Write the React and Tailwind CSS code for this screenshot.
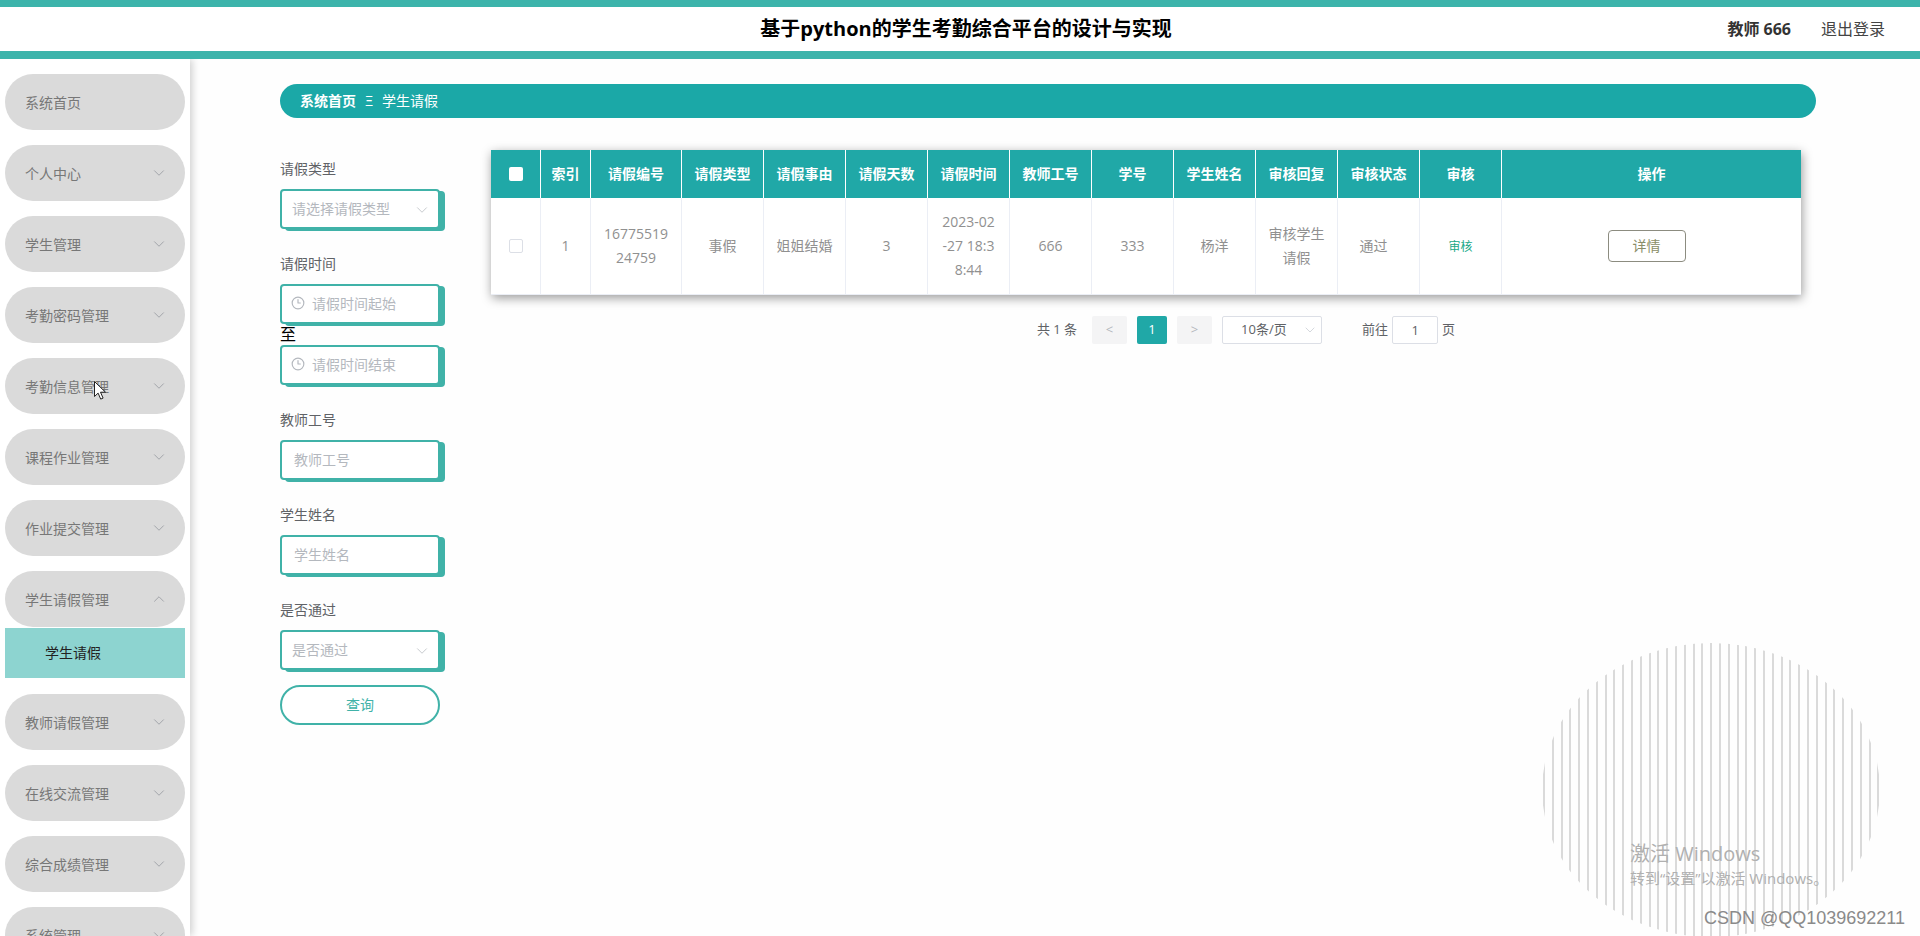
import { ChevronDown, ChevronUp, Clock3 } from "lucide-react";

const menu = [
  { label: "系统首页", leaf: true },
  { label: "个人中心" },
  { label: "学生管理" },
  { label: "考勤密码管理" },
  { label: "考勤信息管理" },
  { label: "课程作业管理" },
  { label: "作业提交管理" },
  { label: "学生请假管理", children: ["学生请假"] },
  { label: "教师请假管理" },
  { label: "在线交流管理" },
  { label: "综合成绩管理" },
  { label: "系统管理" },
];

const columns = [
  { label: "索引", width: "w-[50px]" },
  { label: "请假编号", width: "w-[91px]" },
  { label: "请假类型", width: "w-[82px]" },
  { label: "请假事由", width: "w-[82px]" },
  { label: "请假天数", width: "w-[82px]" },
  { label: "请假时间", width: "w-[82px]" },
  { label: "教师工号", width: "w-[82px]" },
  { label: "学号", width: "w-[82px]" },
  { label: "学生姓名", width: "w-[82px]" },
  { label: "审核回复", width: "w-[82px]" },
  { label: "审核状态", width: "w-[82px]" },
  { label: "审核", width: "w-[82px]" },
  { label: "操作", width: "" },
];

const record = [
  ["1"],
  ["16775519", "24759"],
  ["事假"],
  ["姐姐结婚"],
  ["3"],
  ["2023-02", "-27 18:3", "8:44"],
  ["666"],
  ["333"],
  ["杨洋"],
  ["审核学生", "请假"],
];

const fieldBox =
  "h-10 w-40 appearance-none rounded border-2 border-[#40b2a8] bg-white pb-px text-sm text-[#b4b8be] placeholder:text-[#b4b8be] shadow-[5px_2px_0_#40b2a8] outline-none";

function Header() {
  return (
    <header className="relative z-20 grid h-[59px] shrink-0 grid-cols-[1fr_auto_1fr] items-center border-t-[7px] border-b-8 border-[#3cb4ab] bg-white">
      <h1 className="col-start-2 pl-3 text-xl leading-7 font-bold text-black">
        基于python的学生考勤综合平台的设计与实现
      </h1>
      <div className="flex items-center justify-end gap-[30px] pr-[35px] text-base leading-6 text-[#333]">
        <span className="font-bold">教师 666</span>
        <button type="button" className="text-[#444]">
          退出登录
        </button>
      </div>
    </header>
  );
}

function Sidebar() {
  return (
    <nav className="z-10 w-[190px] shrink-0 overflow-hidden bg-white px-[5px] pt-[15px] shadow-[2px_0_8px_rgba(0,0,0,0.2)]">
      <ul className="flex flex-col gap-[15px]">
        {menu.map((item) => (
          <li key={item.label}>
            <button
              type="button"
              className="flex h-14 w-full items-center justify-between rounded-full bg-[#dadada] pr-[17px] pb-px pl-5 text-sm text-[#777]"
            >
              <span className="pt-[3px]">{item.label}</span>
              {!item.leaf &&
                (item.children ? (
                  <ChevronUp size={18} strokeWidth={1} className="text-[#909399]" />
                ) : (
                  <ChevronDown size={18} strokeWidth={1} className="text-[#909399]" />
                ))}
            </button>
            {item.children && (
              <ul className="py-px">
                {item.children.map((child) => (
                  <li key={child}>
                    <a
                      href="#leave"
                      className="flex h-[50px] items-center bg-[#8dd4d0] pl-10 text-sm text-[#222]"
                    >
                      {child}
                    </a>
                  </li>
                ))}
              </ul>
            )}
          </li>
        ))}
      </ul>
    </nav>
  );
}

function Label({ htmlFor, children }) {
  return (
    <label htmlFor={htmlFor} className="block h-10 text-sm leading-10 text-[#606266]">
      {children}
    </label>
  );
}

function SelectField({ id, label, placeholder }) {
  return (
    <div>
      <Label htmlFor={id}>{label}</Label>
      <div className="relative w-40">
        <select id={id} className={`${fieldBox} pl-[10px]`}>
          <option>{placeholder}</option>
        </select>
        <ChevronDown
          size={18}
          strokeWidth={1}
          className="pointer-events-none absolute top-3 right-[9px] text-[#b4b8be]"
        />
      </div>
    </div>
  );
}

function TextField({ id, label }) {
  return (
    <div>
      <Label htmlFor={id}>{label}</Label>
      <input id={id} type="text" placeholder={label} className={`${fieldBox} block pl-3`} />
    </div>
  );
}

function TimeInput({ id, placeholder }) {
  return (
    <div className="relative w-40">
      <input
        id={id}
        type="text"
        aria-label={placeholder}
        placeholder={placeholder}
        className={`${fieldBox} block pl-[30px]`}
      />
      <Clock3
        size={14}
        strokeWidth={2}
        className="pointer-events-none absolute top-3 left-[11px] text-[#b4b8be]"
      />
    </div>
  );
}

function SearchForm() {
  return (
    <form className="flex w-40 shrink-0 flex-col gap-[15px]">
      <SelectField id="type" label="请假类型" placeholder="请选择请假类型" />
      <div>
        <Label htmlFor="start">请假时间</Label>
        <TimeInput id="start" placeholder="请假时间起始" />
        <div className="h-[21px] text-base leading-[21px] text-black">至</div>
        <TimeInput id="end" placeholder="请假时间结束" />
      </div>
      <TextField id="teacher" label="教师工号" />
      <TextField id="student" label="学生姓名" />
      <SelectField id="passed" label="是否通过" placeholder="是否通过" />
      <button
        type="button"
        className="h-10 w-full rounded-full border-2 border-[#40b2a8] bg-white text-sm text-[#40b2a8]"
      >
        查询
      </button>
    </form>
  );
}

function LeaveTable() {
  const head = "border-r border-white py-3 font-bold last:border-r-0";
  const cell = "border-r border-b border-[#ebeef5] py-3 last:border-r-0";
  return (
    <table className="w-full table-fixed border-separate border-spacing-0 bg-white text-center text-sm leading-6 text-[#909090] shadow-[1px_3px_10px_rgba(0,0,0,0.4)]">
      <thead className="bg-[#20a8a7] text-white">
        <tr>
          <th className={`${head} w-[50px]`}>
            <input
              type="checkbox"
              aria-label="全选"
              className="mx-auto block size-[14px] appearance-none rounded-xs bg-white"
            />
          </th>
          {columns.map((c) => (
            <th key={c.label} className={`${head} ${c.width}`}>
              {c.label}
            </th>
          ))}
        </tr>
      </thead>
      <tbody>
        <tr>
          <td className={cell}>
            <input
              type="checkbox"
              aria-label="选择第1行"
              className="mx-auto block size-[14px] appearance-none rounded-xs border border-[#dcdfe6] bg-white"
            />
          </td>
          {record.map((lines, i) => (
            <td key={i} className={cell}>
              {lines.map((line) => (
                <div key={line}>{line}</div>
              ))}
            </td>
          ))}
          <td className={`${cell} pr-[10px]`}>通过</td>
          <td className={cell}>
            <button type="button" className="text-xs text-[#20a887]">
              审核
            </button>
          </td>
          <td className={`${cell} pr-[10px]`}>
            <button
              type="button"
              className="h-8 w-[78px] rounded border border-[#8c8c80] bg-white text-[#8a8e68]"
            >
              详情
            </button>
          </td>
        </tr>
      </tbody>
    </table>
  );
}

function Pagination() {
  const arrow = "h-7 w-[35px] rounded-xs bg-[#f4f4f5] text-[#b4b8be]";
  return (
    <div className="flex items-center justify-center pl-[200px] text-[13px] text-[#606266]">
      <span className="pr-[15px]">共 1 条</span>
      <div className="flex gap-[10px]">
        <button type="button" aria-label="上一页" className={arrow}>
          &lt;
        </button>
        <button type="button" className="h-7 w-[30px] rounded-xs bg-[#20a8a7] text-white">
          1
        </button>
        <button type="button" aria-label="下一页" className={arrow}>
          &gt;
        </button>
        <div className="relative">
          <select
            aria-label="每页条数"
            className="h-7 w-[100px] appearance-none rounded-xs border border-[#dcdfe6] bg-white pl-[18px] text-[13px]"
          >
            <option>10条/页</option>
          </select>
          <ChevronDown
            size={16}
            strokeWidth={1}
            className="pointer-events-none absolute top-[6px] right-1 text-[#c0c4cc]"
          />
        </div>
      </div>
      <label className="flex items-center gap-1 pl-10">
        前往
        <input
          type="text"
          defaultValue="1"
          className="h-7 w-[46px] rounded-xs border border-[#dcdfe6] bg-white text-center"
        />
        页
      </label>
    </div>
  );
}

function StripedDisc() {
  return (
    <svg width="340" height="296" viewBox="0 0 340 296" aria-hidden="true">
      <defs>
        <clipPath id="disc">
          <ellipse cx="170" cy="148" rx="169" ry="147" />
        </clipPath>
      </defs>
      <g clipPath="url(#disc)" fill="#dadada">
        {Array.from({ length: 39 }, (_, i) => (
          <rect key={i} x={Math.round(2 + i * 8.8)} y="0" width="2" height="296" />
        ))}
      </g>
    </svg>
  );
}

function Watermarks() {
  return (
    <div className="pointer-events-none">
      <div className="absolute top-[642px] right-[39px]">
        <StripedDisc />
      </div>
      <div className="absolute top-[840px] right-[90px] w-[200px] whitespace-nowrap text-[#b0b0b0]">
        <p className="text-xl leading-7">激活 Windows</p>
        <p className="text-[15px] leading-5">转到“设置”以激活 Windows。</p>
      </div>
      <p className="absolute right-[15px] bottom-[6px] font-['Liberation_Sans'] text-lg leading-6 text-[#8a8a8a]">
        CSDN @QQ1039692211
      </p>
    </div>
  );
}

function Pointer() {
  return (
    <svg
      className="pointer-events-none absolute top-[380px] left-[93px] z-20"
      width="14"
      height="21"
      viewBox="0 0 14 21"
      aria-hidden="true"
    >
      <path
        d="M1.5 1.5v15l3.6-3.4 2.6 6 2.4-1-2.6-5.9h5z"
        fill="#fff"
        stroke="#222"
        strokeWidth="1"
      />
    </svg>
  );
}

export default function App() {
  return (
    <div className="relative flex h-screen flex-col overflow-hidden bg-[#fefefe] font-['Open_Sans','Noto_Sans_CJK_SC',sans-serif]">
      <Header />
      <div className="flex min-h-0 flex-1">
        <Sidebar />
        <main className="min-w-0 flex-1 pt-[25px] pr-[104px] pl-[90px]">
          <div className="flex h-[34px] items-center gap-2 rounded-full bg-[#1ba8a7] px-5 text-sm text-white">
            <a href="#home" className="font-bold">
              系统首页
            </a>
            <span className="w-[10px] text-center text-sm">Ξ</span>
            <span>学生请假</span>
          </div>
          <div className="flex gap-[51px] pt-8 pr-[15px]">
            <div className="-mt-px">
              <SearchForm />
            </div>
            <section className="flex min-w-0 flex-1 flex-col gap-[21px]">
              <LeaveTable />
              <Pagination />
            </section>
          </div>
        </main>
      </div>
      <Watermarks />
      <Pointer />
    </div>
  );
}
